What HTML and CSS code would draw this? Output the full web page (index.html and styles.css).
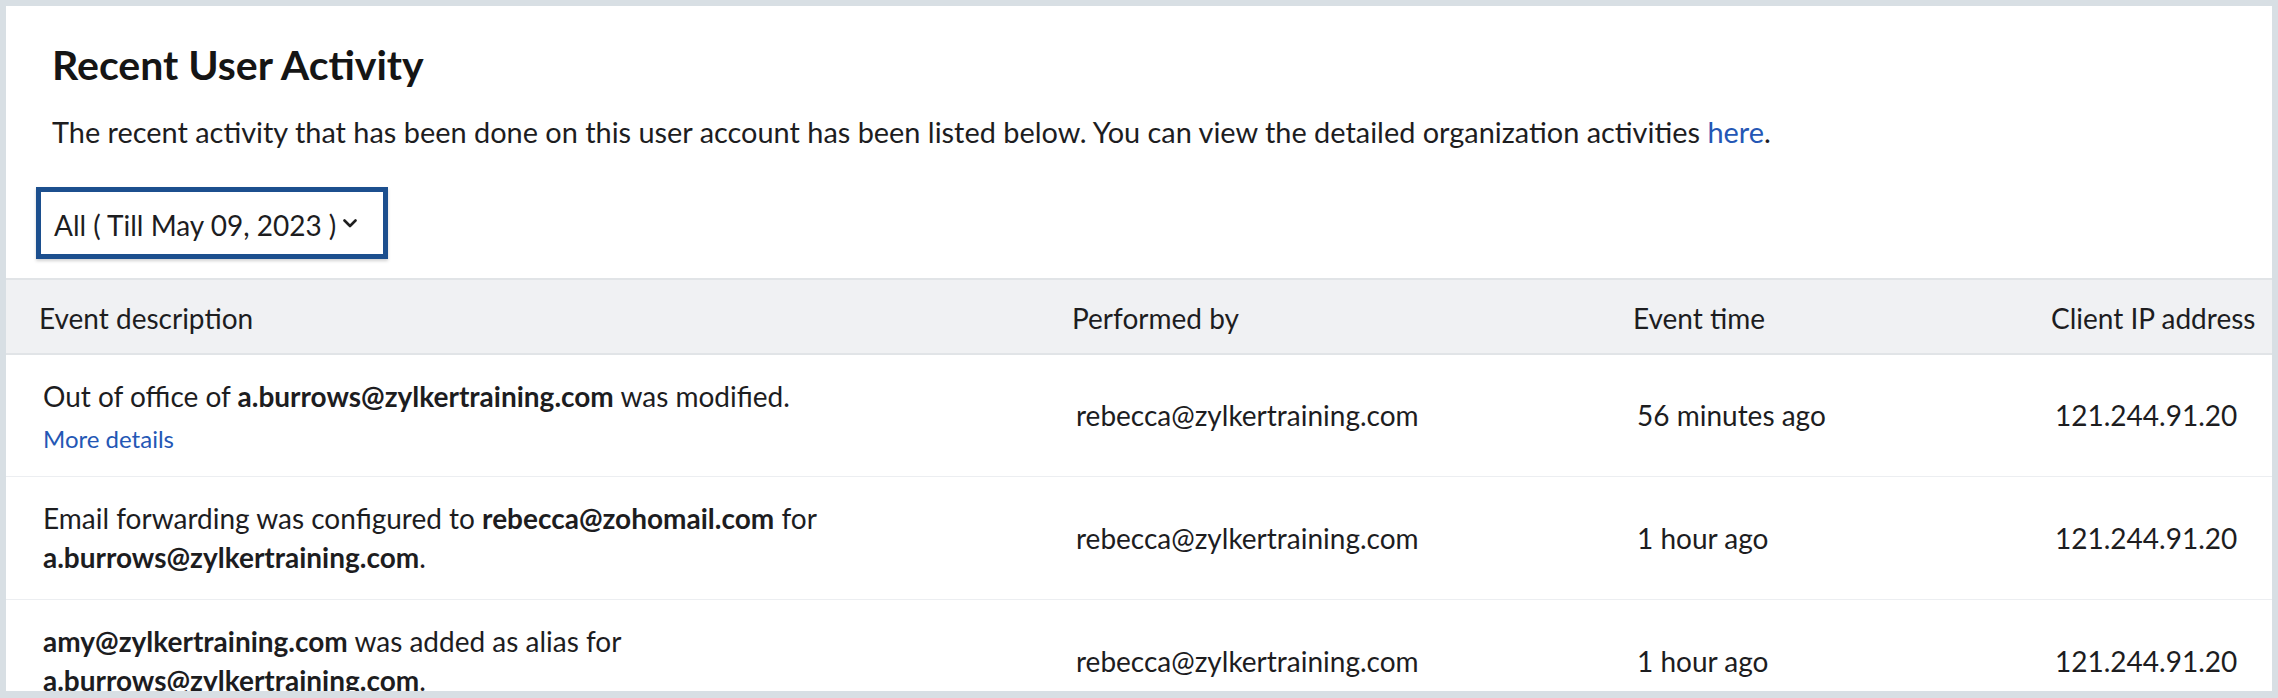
FILE: index.html
```html
<!DOCTYPE html>
<html lang="en">
<head>
<meta charset="utf-8">
<title>Recent User Activity</title>
<link rel="stylesheet" href="styles.css">
</head>
<body>
<main class="card">
  <section class="intro">
    <h1 class="title">Recent User Activity</h1>
    <p class="lead">The recent activity that has been done on this user account has been listed below. You can view the detailed organization activities <a class="link" href="#">here</a>.</p>
  </section>
  <div class="filter">
    <button class="select" type="button">All ( Till May 09, 2023 )<svg class="chev" width="14" height="9" viewBox="0 0 14 9"><polyline points="1.5,1.5 7,7 12.5,1.5" fill="none" stroke="#1f1f1f" stroke-width="2.6" stroke-linecap="round" stroke-linejoin="round"/></svg></button>
  </div>
  <div class="table">
    <div class="row head-row">
      <div class="th">Event description</div>
      <div class="th">Performed by</div>
      <div class="th">Event time</div>
      <div class="th">Client IP address</div>
    </div>
    <div class="row">
      <div class="td desc">Out of office of <b>a.burrows@zylkertraining.com</b> was modified.<a class="more" href="#">More details</a></div>
      <div class="td">rebecca@zylkertraining.com</div>
      <div class="td">56 minutes ago</div>
      <div class="td">121.244.91.20</div>
    </div>
    <div class="row">
      <div class="td desc">Email forwarding was configured to <b>rebecca@zohomail.com</b> for <b>a.burrows@zylkertraining.com</b>.</div>
      <div class="td">rebecca@zylkertraining.com</div>
      <div class="td">1 hour ago</div>
      <div class="td">121.244.91.20</div>
    </div>
    <div class="row">
      <div class="td desc"><b>amy@zylkertraining.com</b> was added as alias for <b>a.burrows@zylkertraining.com</b>.</div>
      <div class="td">rebecca@zylkertraining.com</div>
      <div class="td">1 hour ago</div>
      <div class="td">121.244.91.20</div>
    </div>
  </div>
</main>
</body>
</html>
```

FILE: styles.css
```css
* { box-sizing: border-box; }
html, body { margin: 0; padding: 0; }
body {
  background: #d8dfe4;
  padding: 6px 6px 0 6px;
  height: 698px;
  overflow: hidden;
  font-family: Lato, "Open Sans", sans-serif;
  color: #1d1d1f;
}
.card {
  background: #ffffff;
  height: 685px;
  overflow: hidden;
}
.intro {
  padding: 35px 46px 0 46px;
}
.title {
  margin: 0;
  font-size: 41px;
  line-height: 48px;
  font-weight: 700;
  color: #151515;
}
.lead {
  margin: 23px 0 0 0;
  font-size: 28.9px;
  line-height: 39px;
}
.link { color: #2457b5; text-decoration: none; }
.filter {
  padding: 36px 0 0 30px;
}
.select {
  display: inline-flex;
  align-items: center;
  gap: 7px;
  height: 72px;
  width: 352px;
  padding: 4px 0 0 13px;
  border: 5px solid #1c4f8e;
  background: #fff;
  box-shadow: 0 2px 3px rgba(0,0,0,0.18);
  font-family: inherit;
  font-size: 28px;
  color: #1d1d1f;
}
.chev { margin-top: -4px; }
.table {
  margin-top: 19px;
}
.row {
  display: grid;
  grid-template-columns: 1033px 561px 418px 1fr;
  padding-left: 33px;
  align-items: center;
  border-bottom: 1px solid #eceef1;
  font-size: 28px;
  line-height: 39px;
}
.head-row {
  height: 77px;
  background: #f0f1f3;
  border-top: 2px solid #e1e4e7;
  border-bottom: 2px solid #e1e4e7;
  padding-top: 3px;
}
.td {
  padding: 22px 0 22px 4px;
}
.desc { max-width: 830px; }
.desc b { font-weight: 700; }
.more {
  display: block;
  margin-top: 8px;
  font-size: 24px;
  line-height: 30px;
  color: #2457b5;
  text-decoration: none;
}
```
